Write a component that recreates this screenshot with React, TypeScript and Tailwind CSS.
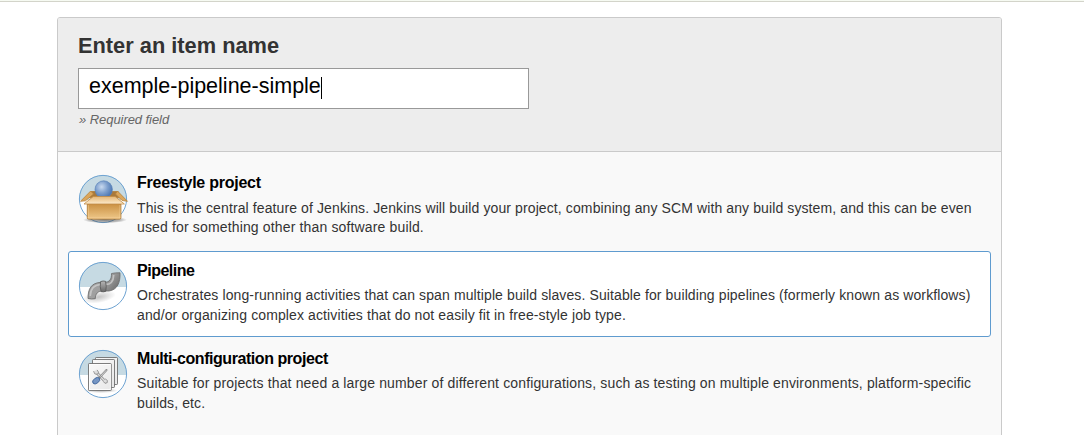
import type { ReactNode } from "react";

function Medallion({ id, children }: { id: string; children: ReactNode }) {
  return (
    <svg viewBox="0 0 50 50" className="h-[50px] w-[50px] shrink-0 overflow-visible">
      <defs>
        <clipPath id={`${id}-clip`}>
          <circle cx="25" cy="25" r="24" />
        </clipPath>
      </defs>
      <g clipPath={`url(#${id}-clip)`}>
        <rect width="50" height="50" fill="#fff" />
        <rect width="50" height="26" fill="#c6dae3" />
      </g>
      <circle cx="25" cy="25" r="23.6" fill="none" stroke="#6ea3d2" strokeWidth="1" />
      {children}
    </svg>
  );
}

function BoxIcon() {
  return (
    <Medallion id="box">
      <defs>
        <radialGradient id="ball" cx=".38" cy=".35" r=".7">
          <stop offset="0" stopColor="#c9daef" />
          <stop offset=".5" stopColor="#7d9fcd" />
          <stop offset="1" stopColor="#4470ad" />
        </radialGradient>
        <linearGradient id="front" x1="0" y1="0" x2="0" y2="1">
          <stop offset="0" stopColor="#c98f40" />
          <stop offset="1" stopColor="#efc88a" />
        </linearGradient>
        <linearGradient id="flap" x1="0" y1="0" x2="0" y2="1">
          <stop offset="0" stopColor="#e5b777" />
          <stop offset="1" stopColor="#fceacb" />
        </linearGradient>
        <radialGradient id="box-shadow">
          <stop offset="0" stopColor="#444" stopOpacity=".7" />
          <stop offset=".7" stopColor="#444" stopOpacity=".35" />
          <stop offset="1" stopColor="#444" stopOpacity="0" />
        </radialGradient>
      </defs>
      <ellipse cx="27" cy="45.8" rx="22" ry="3.4" fill="url(#box-shadow)" />
      <path d="M13 17.5h27l3 6H9.5z" fill="#a9793b" stroke="#b27e36" strokeWidth=".8" />
      <circle cx="25.7" cy="15.5" r="8.7" fill="url(#ball)" stroke="#5b84b9" strokeWidth=".7" />
      <path d="M12.7 17L2.5 27.3l5-.5 8-6.8zM39.5 17l10 10.3-5.5-.8-6.5-6.5z" fill="#dba65c" stroke="#b8843c" strokeWidth=".8" />
      <path d="M9.3 29.5h33.6v14.2q0 1.4-1.4 1.4H10.7q-1.4 0-1.4-1.4z" fill="url(#front)" stroke="#b07b32" strokeWidth=".9" />
      <path d="M10.3 31v13h31.6V31" fill="none" stroke="#ffe0ae" strokeWidth=".7" opacity=".6" />
      <path d="M15.2 22.5h22L46.4 30H6z" fill="url(#flap)" stroke="#c08b46" strokeWidth=".8" />
    </Medallion>
  );
}

function PipeIcon() {
  return (
    <Medallion id="pipe">
      <defs>
        <linearGradient id="steel" x1="0" y1="0" x2="1" y2=".65">
          <stop offset="0" stopColor="#a2a2a2" />
          <stop offset=".55" stopColor="#a0a0a0" />
          <stop offset="1" stopColor="#666" />
        </linearGradient>
        <linearGradient id="band" x1="0" y1="0" x2="0" y2="1">
          <stop offset="0" stopColor="#b8b8b8" />
          <stop offset="1" stopColor="#666" />
        </linearGradient>
        <radialGradient id="pipe-shadow">
          <stop offset="0" stopColor="#555" stopOpacity=".35" />
          <stop offset="1" stopColor="#555" stopOpacity="0" />
        </radialGradient>
      </defs>
      <ellipse cx="21" cy="36" rx="17" ry="6" fill="url(#pipe-shadow)" transform="rotate(-10 21 36)" />
      <path d="M10 37.5C10 28 13 22 22.7 21.3h3.5c5.3 0 7.4-2.8 7.3-8.8q4-.9 8.5-.7c.4 9.5-2.5 17-11 18.2H25c-5.2 0-7.7 2.6-7.7 7.7q-3.8.7-7.3-.2z" fill="url(#steel)" stroke="#686868" strokeWidth=".8" />
      <path d="M12.2 35c.4-7.8 4.5-11.5 11.3-11.5h4c5.5 0 8-3.8 8.2-9.5" fill="none" stroke="#d4d4d4" strokeWidth="1.7" opacity=".7" />
      <path d="M22.6 20.6q2.5-1 4.9-.3 1.3 4.8.3 10-2.3.9-4.7.3-1.5-5-.5-10z" fill="url(#band)" stroke="#555" strokeWidth=".8" />
    </Medallion>
  );
}

function PagesIcon() {
  return (
    <Medallion id="pages">
      <defs>
        <linearGradient id="sheet" x1="0" y1="0" x2="1" y2="1">
          <stop offset="0" stopColor="#fafafa" />
          <stop offset="1" stopColor="#e8e8e8" />
        </linearGradient>
        <radialGradient id="pages-shadow">
          <stop offset="0" stopColor="#333" stopOpacity=".4" />
          <stop offset="1" stopColor="#333" stopOpacity="0" />
        </radialGradient>
      </defs>
      <ellipse cx="23" cy="41.5" rx="17" ry="2.6" fill="url(#pages-shadow)" />
      <g fill="url(#sheet)" stroke="#6f6f6f" strokeWidth=".9">
        <rect x="17.5" y="8.5" width="22" height="27" rx=".7" />
        <rect x="14.5" y="10.5" width="22" height="28" rx=".7" />
        <rect x="10.5" y="14.5" width="22.8" height="27" rx=".7" />
      </g>
      <rect x="11.5" y="15.5" width="20.8" height="25" fill="none" stroke="#fff" strokeWidth=".8" />
      <path d="M18.5 23.5l9 9.2" stroke="#888" strokeWidth="2.8" strokeLinecap="round" />
      <path d="M18.5 23.5l9 9.2" stroke="#ddd" strokeWidth="1.4" strokeLinecap="round" />
      <path d="M15.5 22.2l1.4 2.8 2.7.2 1-2-1.5-2.3M27.2 29.8l2.2 1.7-.2 2.2-2.2.6-1.6-1.7" fill="#ddd" stroke="#888" strokeWidth=".8" />
      <path d="M28.5 21l-7.8 8.4" stroke="#888" strokeWidth="2" strokeLinecap="round" />
      <path d="M28.3 21.2l-6 6.5" stroke="#e5e5e5" strokeWidth=".8" />
      <ellipse cx="18.2" cy="31.7" rx="4" ry="2.6" transform="rotate(-38 18.2 31.7)" fill="#7696c4" stroke="#3d6399" strokeWidth=".8" />
    </Medallion>
  );
}

function SelectableItem({ selected, className, icon, children }: { selected?: boolean; className: string; icon: ReactNode; children: ReactNode }) {
  return (
    <li className={`ml-[10px] flex h-[86px] w-[923px] rounded-[3px] border pl-[9px] ${selected ? "border-[#5f9bcf] bg-white" : "border-transparent"} ${className}`}>
      {icon}
      <div className="ml-[9px] whitespace-nowrap">{children}</div>
    </li>
  );
}

export default function App() {
  return (
    <div className="h-[435px] overflow-hidden bg-white font-['Liberation_Sans',Arial,sans-serif] text-[#333]">
      <div className="h-[2px] border-b border-[#d3d4ca] bg-[#f6faf2]" />
      <main className="mt-[15px] ml-[57px] h-[440px] w-[945px] rounded-[3px] border border-[#cacaca] bg-[#f9f9f9]">
        <header className="h-[134px] rounded-t-[2px] border-b border-[#cacaca] bg-[#ededed] pl-5">
          <h1 className="pt-[14px] text-[21.8px] leading-7 font-bold">Enter an item name</h1>
          <div className="mt-2 flex h-[41px] w-[451px] border border-[#999] bg-white pl-[10px] text-black">
            <span className="mt-[4px] text-[21.5px] leading-[26px]">exemple-pipeline-simple</span>
            <span className="mt-2 h-[22px] w-px bg-black" />
          </div>
          <p className="mt-[3px] ml-px text-[13px] leading-4 tracking-[-0.06px] text-[#666] italic">» Required field</p>
        </header>
        <ul>
          <SelectableItem className="mt-[11px] pt-[10px]" icon={<BoxIcon />}>
            <h2 className="text-[16px] leading-[18px] font-bold tracking-[-0.25px] text-black">Freestyle project</h2>
            <p className="mt-[7px] text-[14px] leading-[19px]">
              <span className="block tracking-[0.108px]">This is the central feature of Jenkins. Jenkins will build your project, combining any SCM with any build system, and this can be even</span>
              <span className="block tracking-[0.15px]">used for something other than software build.</span>
            </p>
          </SelectableItem>
          <SelectableItem selected className="mt-[2px] pt-[9px]" icon={<PipeIcon />}>
            <h2 className="pt-px text-[16px] leading-[18px] font-bold tracking-[-0.48px] text-black">Pipeline</h2>
            <p className="mt-[5px] text-[14px] leading-[20px]">
              <span className="block tracking-[0.11px]">Orchestrates long-running activities that can span multiple build slaves. Suitable for building pipelines (formerly known as workflows)</span>
              <span className="block tracking-[0.115px]">and/or organizing complex activities that do not easily fit in free-style job type.</span>
            </p>
          </SelectableItem>
          <SelectableItem className="mt-[2px] pt-[9px]" icon={<PagesIcon />}>
            <h2 className="pt-px text-[16px] leading-[18px] font-bold tracking-[-0.44px] text-black">Multi-configuration project</h2>
            <p className="mt-[5px] text-[14px] leading-[20px]">
              <span className="block tracking-[0.14px]">Suitable for projects that need a large number of different configurations, such as testing on multiple environments, platform-specific</span>
              <span className="block tracking-[0.1px]">builds, etc.</span>
            </p>
          </SelectableItem>
        </ul>
      </main>
    </div>
  );
}
